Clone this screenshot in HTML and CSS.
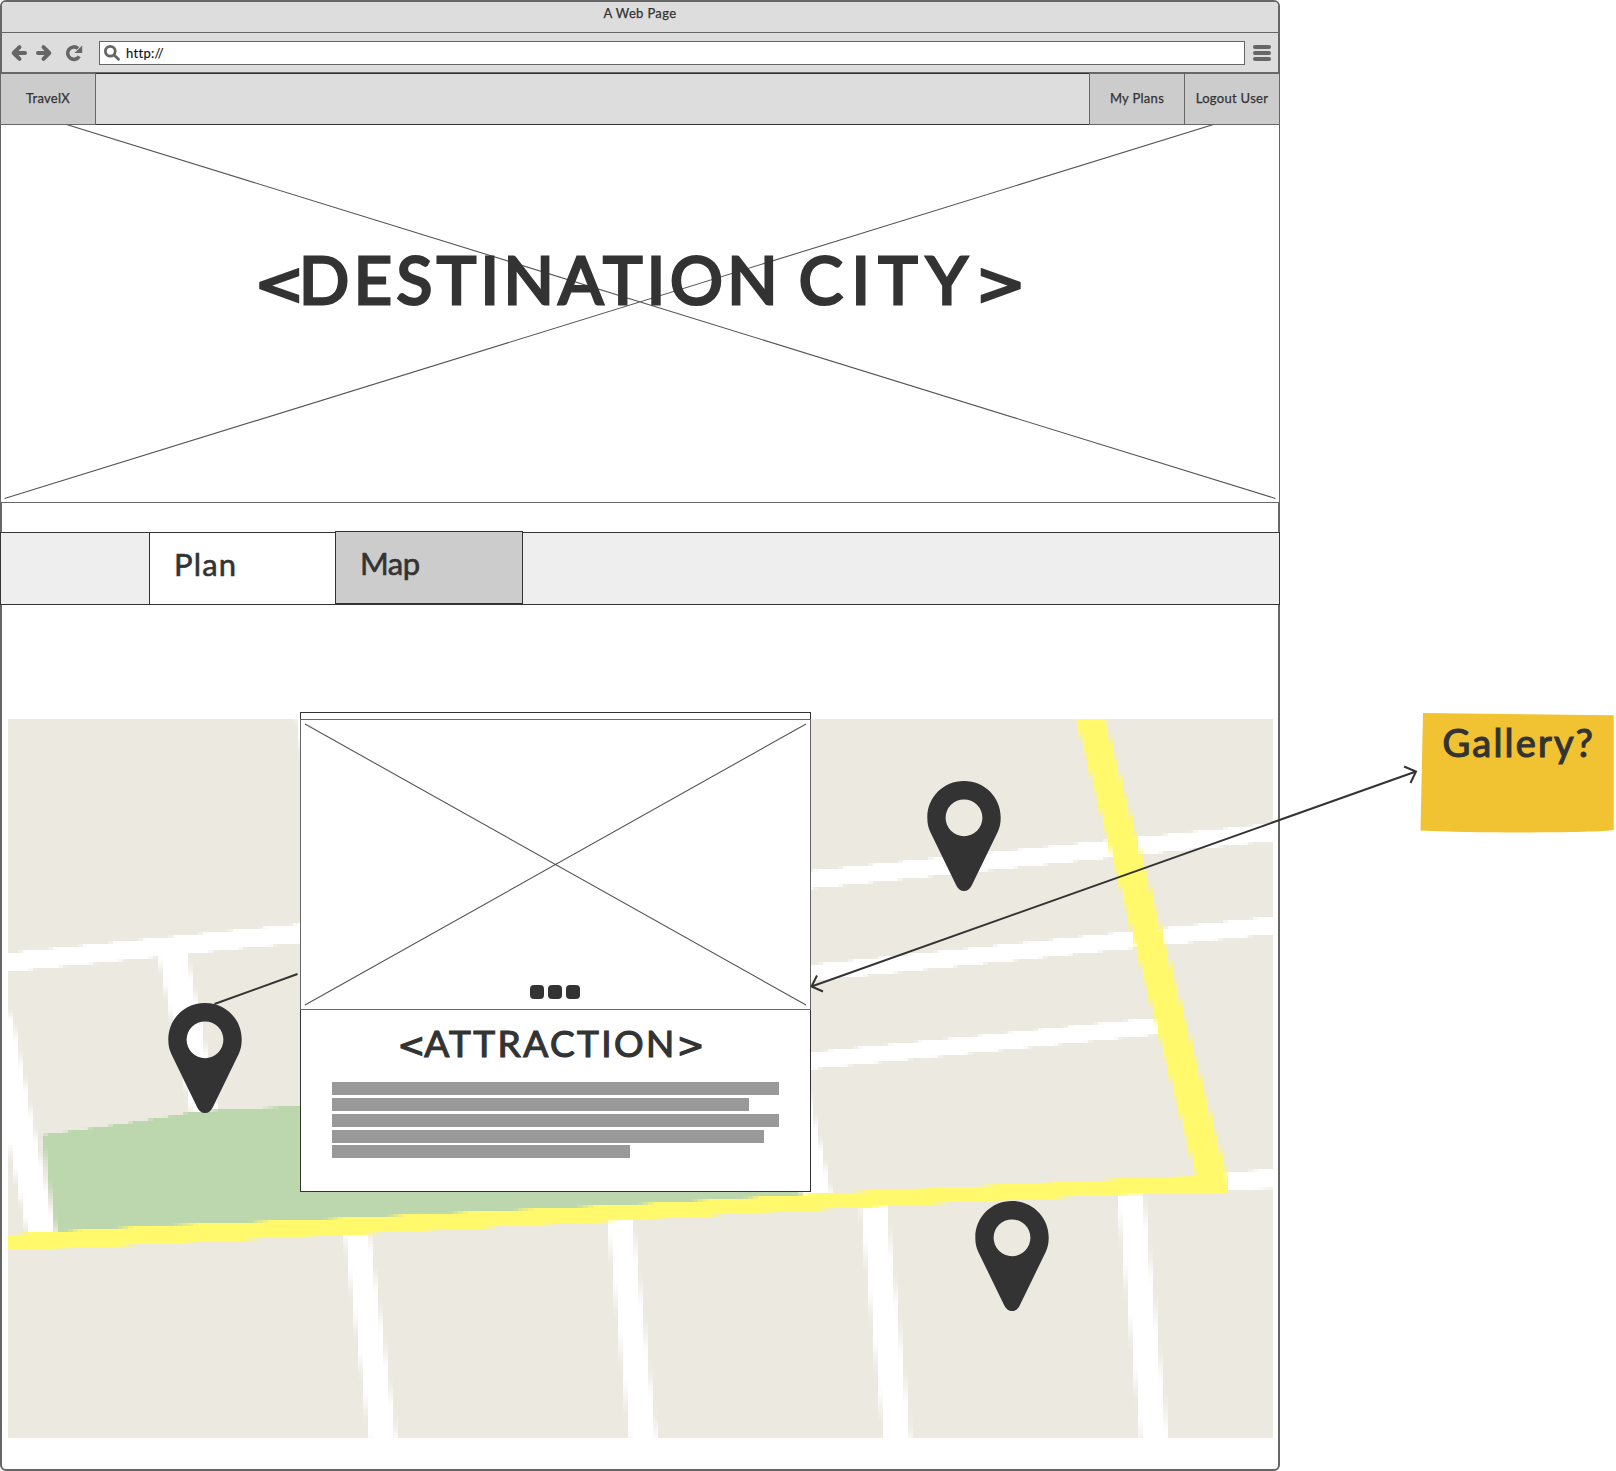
FILE: index.html
```html
<!DOCTYPE html>
<html lang="en">
<head>
<meta charset="utf-8">
<title>A Web Page</title>
<link rel="stylesheet" href="styles.css">
</head>
<body>
<svg class="defs" width="0" height="0" aria-hidden="true">
  <!-- samples one pixel per 5x3 cell to give the street map its coarse tiles -->
  <filter id="pixelate" x="-10" y="-9" width="1285" height="737" filterUnits="userSpaceOnUse" color-interpolation-filters="sRGB">
    <feGaussianBlur in="SourceGraphic" stdDeviation="1.300 .7" result="soft"/>
    <feFlood x="2" y="1" width="1" height="1" flood-color="#000" result="flood"/>
    <feOffset in="flood" dx="0" dy="0" x="0" y="0" width="5" height="3" result="cell"/>
    <feTile in="cell" result="grid"/>
    <feComposite in="soft" in2="grid" operator="in"/>
    <feMorphology operator="dilate" radius="2 1"/>
  </filter>
  <symbol id="pin" viewBox="0 0 74 110">
    <path fill="#333" fill-rule="evenodd" d="M37 0C57.500 0 73.700 16 73.700 36.500C73.700 42 72.800 46.500 70.700 51L44.700 104.500C43 108 40.500 110 37 110S31 108 29.300 104.500L3.300 51C1.200 46.500 .3 42 .3 36.500C.3 16 16.500 0 37 0ZM37 18.400A18.400 18.400 0 1 0 37 55.200A18.400 18.400 0 1 0 37 18.400Z"/>
  </symbol>
</svg>

<div class="canvas">
  <div class="browser">
    <header class="titlebar">A Web Page</header>
    <div class="toolbar">
      <svg class="ic back" viewBox="0 0 16 16"><path d="M8.500 2.200L2.700 8L8.500 13.800M3.500 8H14" /></svg>
      <svg class="ic forward" viewBox="0 0 16 16"><path d="M7.500 2.200L13.300 8L7.500 13.800M12.500 8H2"/></svg>
      <svg class="ic reload" viewBox="0 0 16 16"><path d="M13.200 11.300A6.200 6.200 0 1 1 12 3.500"/><path class="solid" d="M16.200 .5V8H8.500Z"/></svg>
      <div class="url">
        <svg class="search" viewBox="0 0 16 16"><circle cx="6.300" cy="6.300" r="4.900"/><path d="M10 10L14.500 14.300"/></svg>
        <span>http://</span>
      </div>
      <div class="menu"><i></i><i></i><i></i></div>
    </div>

    <nav class="nav">
      <a class="nav-item brand">TravelX</a>
      <div class="nav-space"></div>
      <a class="nav-item">My Plans</a>
      <a class="nav-item last">Logout User</a>
    </nav>

    <section class="hero">
      <svg class="hero-cross" viewBox="0 0 1280 378"><path d="M4.500 -19.700L1275.500 373.500M4.500 373.500L1275.500 -19.700"/></svg>
      <h1><span class="angle">&lt;</span>DESTINATION <span class="wide">CITY</span><span class="angle">&gt;</span></h1>
    </section>

    <div class="tabs">
      <div class="tab plan">Plan</div>
      <div class="tab map-tab">Map</div>
    </div>

    <main class="map">
      <svg class="streets" viewBox="8 719 1265 719" width="1265" height="719">
        <rect class="land" x="8" y="719" width="1265" height="719"/>
        <g transform="translate(8 719)"><g filter="url(#pixelate)"><g transform="translate(-10 -719)">
          <rect class="land" x="-20" y="700" width="1330" height="760"/>
          <g class="road">
            <path d="M296 700H320V760H305L298 719Z"/>
            <path d="M-10 955L310 923V942L-10 974Z"/>
            <path d="M159 950L188 948L220 1112H193Z"/>
            <path d="M-10 1008H10L16 1025L35 1123L58 1236H30L10 1140L6 1100H-10Z"/>
            <path d="M800 872L1290 822V839.500L800 890Z"/>
            <path d="M800 966L1290 915V932.500L800 982.500Z"/>
            <path d="M800 1053.500L1170 1016.500V1033.500L800 1070.500Z"/>
            <path d="M790 1000L834 1196H790Z"/>
            <path d="M1220 1173L1290 1168V1188L1220 1190Z"/>
            <path d="M346 1230H371L400 1450H373Z"/>
            <path d="M609 1215H634L660 1450H633Z"/>
            <path d="M862 1200H888L914 1450H887Z"/>
            <path d="M1119 1190H1145L1171 1450H1144Z"/>
          </g>
          <path class="park" d="M44 1135L123 1124L167 1117L200 1111L283 1107L500 1100L780 1150L806 1198L59 1236Z"/>
          <path class="highway" d="M-10 1235.500L160 1225.500L325 1219L640 1204L831 1193L1155 1177.500L1198 1176L1078 719L1073 700H1102L1107 719L1228 1172L1230 1192L1117 1195L891 1206L700 1216.500L620 1221L345 1235L164 1244L-10 1252Z"/>
        </g></g></g>
      </svg>

      <svg class="pin pin-west"><use href="#pin"/></svg>
      <svg class="pin pin-north"><use href="#pin"/></svg>
      <svg class="pin pin-south"><use href="#pin"/></svg>

      <article class="card">
        <div class="photo">
          <svg viewBox="0 0 509 289"><path d="M4 4L505 285M4 285L505 4"/></svg>
          <div class="dots"><i></i><i></i><i></i></div>
        </div>
        <h2><span class="angle">&lt;</span>ATTRACTION<span class="angle">&gt;</span></h2>
        <div class="lines">
          <i class="w100"></i><i class="w93"></i><i class="w100"></i><i class="w97"></i><i class="w67"></i>
        </div>
      </article>
    </main>
  </div>

  <div class="note">
    <svg viewBox="0 0 194 120"><path d="M3 0L193.700 2.200V117C180 119.700 60 120.500 .500 117.500Z"/></svg>
    <span>Gallery?</span>
  </div>

  <svg class="arrows" viewBox="0 0 1616 1471"><path d="M214.500 1004L297.500 974M811.500 986.500L1416 771.500M817 975.500L811.500 986.500L823 991.500M1404 766.500L1416 771.500L1410.500 783"/></svg>
</div>
</body>
</html>
```
FILE: styles.css
```css
* { box-sizing: border-box; }
body {
  margin: 0;
  background: #fff;
  color: #333;
  font-family: Lato, "Open Sans", sans-serif;
}
.defs { position: absolute; }
.canvas {
  position: relative;
  display: flex;
  width: 1616px;
  height: 1471px;
  overflow: hidden;
}
i { display: block; }

.browser {
  display: flex;
  flex-direction: column;
  width: 1280px;
  height: 1471px;
  border: 2px solid #666;
  border-radius: 6px;
}
.titlebar {
  height: 31px;
  padding-top: 2px;
  background: #ddd;
  border-bottom: 1px solid #666;
  border-radius: 4px 4px 0 0;
  font-size: 13px;
  line-height: 18px;
  letter-spacing: .35px;
  text-align: center;
  -webkit-text-stroke: .25px #333;
}
.toolbar {
  display: flex;
  align-items: center;
  height: 40px;
  padding: 0 7px 0 8px;
  background: #ddd;
  border-bottom: 1px solid #666;
}
.ic, .search { flex: none; width: 16px; height: 16px; fill: none; stroke: #666; stroke-width: 4; stroke-linecap: round; stroke-linejoin: round; }
.ic { margin-left: 1px; overflow: visible; }
.forward { margin-left: 9px; }
.reload { margin-left: 14px; stroke-width: 3.600; stroke-linecap: butt; }
.solid { fill: #666; stroke: none; }
.url {
  display: flex;
  align-items: center;
  flex: 1;
  height: 24px;
  margin: 0 8px 0 17px;
  padding-left: 4px;
  background: #fff;
  border: 1px solid #666;
  color: #111;
  font-size: 13px;
  letter-spacing: .3px;
  -webkit-text-stroke: .15px #111;
}
.search { stroke-width: 2.800; margin-right: 6px; }
.menu { display: grid; gap: 2px; width: 18px; }
.menu i { height: 4px; border-radius: 2px; background: #666; }

.nav {
  display: flex;
  flex: none;
  height: 52px;
  margin: 0 -2px;
  border-bottom: 1px solid #333;
  background: #ddd;
}
.nav-space { flex: 1; border-top: 1px solid #333; }
.nav-item {
  width: 95px;
  height: 52px;
  border: 1px solid #666;
  border-right: 0;
  background: #ccc;
  font-size: 13px;
  letter-spacing: .3px;
  line-height: 49px;
  text-align: center;
  -webkit-text-stroke: .25px #333;
}
.brand, .last { width: 96px; border-right: 1px solid #666; }

.hero {
  position: relative;
  display: flex;
  flex: none;
  justify-content: center;
  height: 378px;
  margin: 0 -2px;
  overflow: hidden;
  background: #fff;
  border: solid #666;
  border-width: 0 1px 1px;
}
.hero-cross { position: absolute; left: -1px; top: 0; width: 1280px; height: 378px; stroke: #555; stroke-width: 1.100; }
h1 {
  position: relative;
  margin: 114px 0 0;
  padding-right: 5px;
  font-size: 66px;
  font-weight: 400;
  line-height: 80px;
  letter-spacing: 4.600px;
  word-spacing: -5px;
  white-space: nowrap;
  -webkit-text-stroke: 3px #333;
}
.wide { letter-spacing: 8.600px; }
.angle { font-family: "DejaVu Sans", sans-serif; }
h1 .angle { font-size: 59px; letter-spacing: -5px; }
h2 .angle { font-size: 33px; letter-spacing: -1px; }

.tabs {
  display: flex;
  flex: none;
  height: 73px;
  margin: 29px -2px 0;
  padding-left: 148px;
  background: #eee;
  border: 1px solid #333;
}
.tab { font-size: 31px; line-height: 62px; padding-left: 24px; -webkit-text-stroke: .6px #333; }
.plan { width: 186px; background: #fff; border-left: 1px solid #333; letter-spacing: 1.200px; }
.map-tab { width: 188px; height: 73px; margin-top: -2px; background: #ccc; border: 1px solid #333; letter-spacing: -.5px; }

.map {
  position: relative;
  flex: none;
  width: 1265px;
  height: 719px;
  margin: 114px 0 0 6px;
}
.streets { display: block; }
.land { fill: #ece9e1; }
.road { fill: #fff; }
.park { fill: #bcd6ae; }
.highway { fill: #fff96b; }
.pin { position: absolute; width: 74px; height: 110px; }
.pin-west { left: 160px; top: 284px; }
.pin-north { left: 919px; top: 62px; }
.pin-south { left: 967px; top: 482px; }

.card {
  position: absolute;
  left: 292px;
  top: -7px;
  width: 511px;
  height: 480px;
  padding-top: 6px;
  background: #fff;
  border: 1px solid #333;
}
.photo {
  position: relative;
  height: 291px;
  margin: 0 -1px;
  border: 1px solid #666;
}
.photo svg { display: block; width: 509px; height: 289px; stroke: #555; stroke-width: 1.100; }
.dots { position: absolute; left: 229px; bottom: 10px; display: flex; gap: 4px; }
.dots i { width: 14px; height: 14px; border-radius: 4px; background: #333; }
h2 {
  height: 46px;
  margin: 10px 0 0;
  padding-right: 10px;
  font-size: 37px;
  font-weight: 400;
  line-height: 46px;
  letter-spacing: 2.400px;
  text-align: center;
  -webkit-text-stroke: 1.200px #333;
}
.lines { display: grid; gap: 2.850px; padding: 16px 31px 0; }
.lines i { height: 13px; background: #999; }
.w100 { width: 447px; }
.w93 { width: 417px; }
.w97 { width: 432px; }
.w67 { width: 298px; }

.note {
  display: grid;
  width: 194px;
  height: 120px;
  margin: 713px 0 0 140px;
}
.note svg, .note span { grid-area: 1 / 1; }
.note svg { width: 194px; height: 120px; fill: #f1c232; }
.note span { padding: 6px 0 0 22.500px; font-size: 38px; line-height: 46px; letter-spacing: 2.200px; -webkit-text-stroke: 1.200px #333; }

.arrows { position: absolute; inset: 0; width: 1616px; height: 1471px; fill: none; stroke: #333; stroke-width: 2; pointer-events: none; }
```
